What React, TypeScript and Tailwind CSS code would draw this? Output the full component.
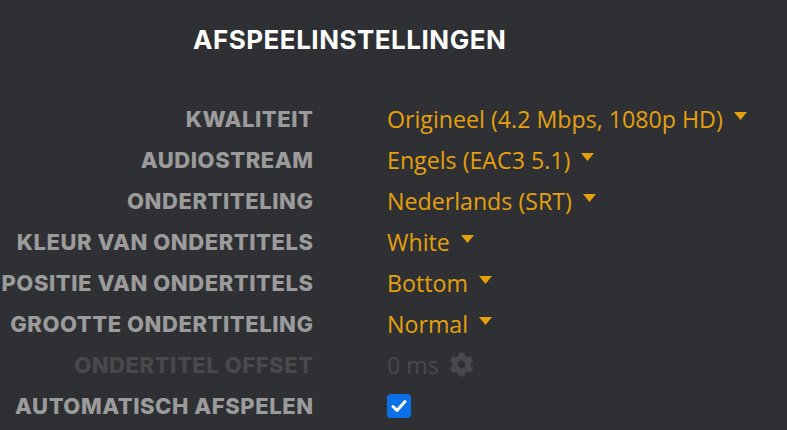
import React from "react";
import { FaCog } from "react-icons/fa";

const Caret = () => (
  <svg width="13" height="8" viewBox="0 0 13 8" className="shrink-0 mb-[6px]">
    <polygon points="0,0 13,0 6.5,8" fill="#e5a00d" />
  </svg>
);

type Row = { label: string; value?: string; kind: "select" | "offset" | "check" };

const rows: Row[] = [
  { label: "KWALITEIT", value: "Origineel (4.2 Mbps, 1080p HD)", kind: "select" },
  { label: "AUDIOSTREAM", value: "Engels (EAC3 5.1)", kind: "select" },
  { label: "ONDERTITELING", value: "Nederlands (SRT)", kind: "select" },
  { label: "KLEUR VAN ONDERTITELS", value: "White", kind: "select" },
  { label: "POSITIE VAN ONDERTITELS", value: "Bottom", kind: "select" },
  { label: "GROOTTE ONDERTITELING", value: "Normal", kind: "select" },
  { label: "ONDERTITEL OFFSET", value: "0 ms", kind: "offset" },
  { label: "AUTOMATISCH AFSPELEN", kind: "check" },
];

export default function App() {
  return (
    <div className="w-[787px] h-[430px] overflow-hidden bg-[#2f3033]">
      <div className="pt-[24px] pl-[193px]">
        <h1 className="text-[26px] leading-[32px] font-bold text-white font-['Inter',sans-serif] tracking-[0.5px]">
          AFSPEELINSTELLINGEN
        </h1>
      </div>
      <div className="mt-[42px] flex flex-col">
        {rows.map((r) => (
          <div key={r.label} className="flex h-[41px] items-center">
            <div className="w-[313px] shrink-0 flex justify-end">
              <span
                className={
                  "whitespace-nowrap font-['Inter',sans-serif] font-extrabold text-[22px] leading-[28px] tracking-[0.55px] -mr-[0.55px] " +
                  (r.kind === "offset" ? "text-[#48494c]" : "text-[#9b9b9b]")
                }
              >
                {r.label}
              </span>
            </div>
            <div className="ml-[74px] flex items-center gap-[11px]">
              {r.kind === "select" && (
                <>
                  <span className="whitespace-nowrap font-['Open_Sans',sans-serif] text-[23.2px] leading-[30px] text-[#e5a00d]">
                    {r.value}
                  </span>
                  <Caret />
                </>
              )}
              {r.kind === "offset" && (
                <>
                  <span className="whitespace-nowrap font-['Open_Sans',sans-serif] text-[23.2px] leading-[30px] text-[#48494c]">
                    {r.value}
                  </span>
                  <FaCog className="text-[#48494c] w-[25px] h-[25px] -ml-[1px]" />
                </>
              )}
              {r.kind === "check" && (
                <div className="w-[24px] h-[24px] rounded-[4px] bg-[#0b6fe8] flex items-center justify-center">
                  <svg width="16" height="14" viewBox="0 0 16 14">
                    <path d="M2 7.5 L6 11.5 L14 2.5" stroke="white" strokeWidth="3" fill="none" strokeLinecap="round" strokeLinejoin="round" />
                  </svg>
                </div>
              )}
            </div>
          </div>
        ))}
      </div>
    </div>
  );
}
